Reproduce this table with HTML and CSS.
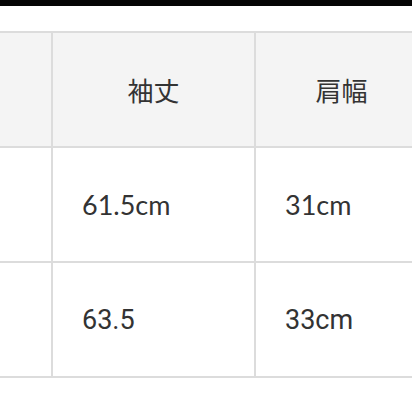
FILE: index.html
```html
<!DOCTYPE html>
<html lang="ja">
<head>
<meta charset="utf-8">
<link rel="stylesheet" href="styles.css">
</head>
<body>
<div class="topbar"></div>
<div class="wrap">
<table class="sizes">
<colgroup><col class="c1"><col class="c2"><col class="c3"></colgroup>
<thead>
<tr><th></th><th>袖丈</th><th>肩幅</th></tr>
</thead>
<tbody>
<tr class="r-lato"><td></td><td>61.5cm</td><td>31cm</td></tr>
<tr class="r-roboto"><td></td><td>63.5</td><td>33cm</td></tr>
</tbody>
</table>
</div>
</body>
</html>
```
FILE: styles.css
```css
html, body {
  margin: 0;
  padding: 0;
  background: #fff;
  overflow: hidden;
  width: 412px;
  height: 412px;
}
.topbar {
  height: 6px;
  background: #050505;
}
.wrap {
  padding-top: 25px;
}
.sizes {
  border-collapse: separate;
  border-spacing: 0;
  table-layout: fixed;
  width: 429px;
  border-top: 2px solid #dcdcdc;
  color: #333;
}
.c1 { width: 53px; }
.c2 { width: 203px; }
.c3 { width: 173px; }
.sizes th, .sizes td {
  border-right: 2px solid #dcdcdc;
  border-bottom: 2px solid #dcdcdc;
  height: 113px;
  padding: 0;
  box-sizing: content-box;
}
.sizes th {
  background: #f4f4f4;
  font-family: "Noto Sans CJK JP", sans-serif;
  font-weight: 400;
  font-size: 26px;
  text-align: center;
  vertical-align: middle;
}
.sizes td {
  background: #fff;
  text-align: left;
  padding-left: 29px;
  vertical-align: middle;
}
.sizes td:first-child { padding-left: 0; }
.r-lato td {
  font-family: Lato, sans-serif;
  font-size: 27px;
}
.r-roboto td {
  font-family: Roboto, sans-serif;
  font-size: 27px;
}
```
